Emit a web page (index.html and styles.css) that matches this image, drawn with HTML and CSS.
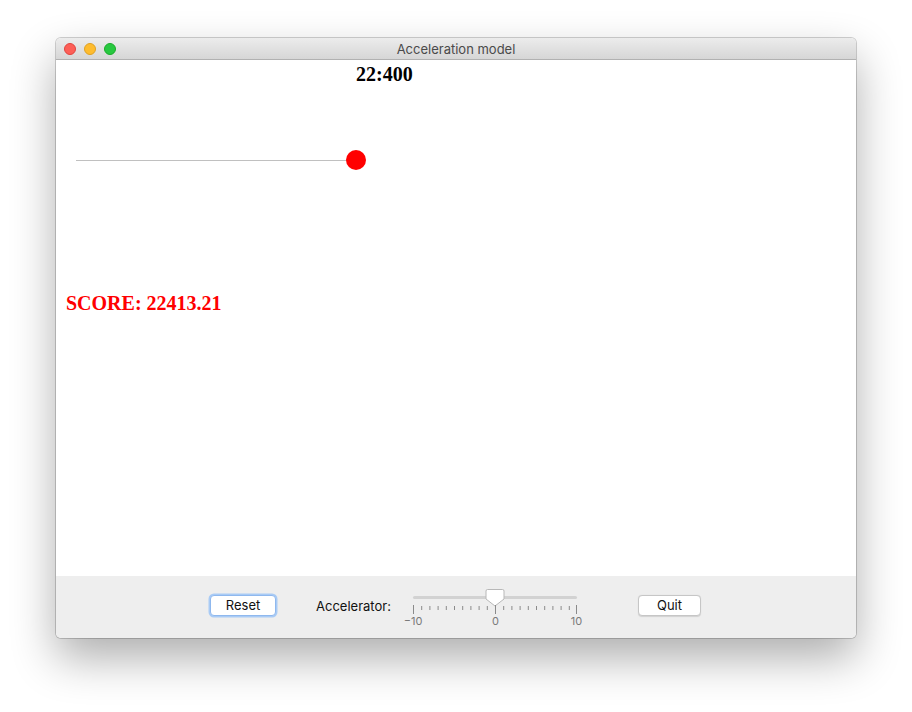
FILE: index.html
```html
<!DOCTYPE html>
<html>
<head>
<meta charset="utf-8">
<link rel="stylesheet" href="styles.css">
</head>
<body>
<div class="window">
  <div class="titlebar">
    <div class="lights">
      <span class="light red"></span>
      <span class="light yellow"></span>
      <span class="light green"></span>
    </div>
    <div class="title">Acceleration model</div>
  </div>
  <div class="canvas">
    <div class="time">22:400</div>
    <div class="trail"></div>
    <div class="ball"></div>
    <div class="score">SCORE: 22413.21</div>
  </div>
  <div class="controls">
    <button class="btn focused">Reset</button>
    <span class="label">Accelerator:</span>
    <div class="slider">
      <div class="track"></div>
      <svg class="thumb" width="20" height="19" viewBox="0 0 20 19">
        <path d="M2.5 1.5 H17.5 A1.5 1.5 0 0 1 19 3 V11 L10 18 L1 11 V3 A1.5 1.5 0 0 1 2.5 1.5 Z" fill="#ffffff" stroke="#b8b8b8" stroke-width="1"/>
      </svg>
      <svg class="ticks" width="170" height="10" viewBox="0 0 170 10">
        <g stroke="#8a8a8a" stroke-width="1">
          <line x1="3.5" y1="0" x2="3.5" y2="9"/>
          <line x1="11.7" y1="1" x2="11.7" y2="5"/>
          <line x1="19.9" y1="1" x2="19.9" y2="5"/>
          <line x1="28.1" y1="1" x2="28.1" y2="5"/>
          <line x1="36.3" y1="1" x2="36.3" y2="5"/>
          <line x1="44.5" y1="1" x2="44.5" y2="5"/>
          <line x1="52.7" y1="1" x2="52.7" y2="5"/>
          <line x1="60.9" y1="1" x2="60.9" y2="5"/>
          <line x1="69.1" y1="1" x2="69.1" y2="5"/>
          <line x1="77.3" y1="1" x2="77.3" y2="5"/>
          <line x1="85.5" y1="0" x2="85.5" y2="9"/>
          <line x1="93.7" y1="1" x2="93.7" y2="5"/>
          <line x1="101.9" y1="1" x2="101.9" y2="5"/>
          <line x1="110.1" y1="1" x2="110.1" y2="5"/>
          <line x1="118.3" y1="1" x2="118.3" y2="5"/>
          <line x1="126.5" y1="1" x2="126.5" y2="5"/>
          <line x1="134.7" y1="1" x2="134.7" y2="5"/>
          <line x1="142.9" y1="1" x2="142.9" y2="5"/>
          <line x1="151.1" y1="1" x2="151.1" y2="5"/>
          <line x1="159.3" y1="1" x2="159.3" y2="5"/>
          <line x1="166.5" y1="0" x2="166.5" y2="9"/>
        </g>
      </svg>
      <div class="marks">
        <span class="mark m-left">&minus;10</span>
        <span class="mark m-mid">0</span>
        <span class="mark m-right">10</span>
      </div>
    </div>
    <button class="btn quit">Quit</button>
  </div>
</div>
</body>
</html>
```
FILE: styles.css
```css
html, body {
  margin: 0;
  padding: 0;
  background: #ffffff;
}
body {
  width: 912px;
  height: 712px;
  padding: 38px 56px 0 56px;
  box-sizing: border-box;
  overflow: hidden;
}
.window {
  width: 800px;
  height: 600px;
  border-radius: 5px;
  overflow: hidden;
  display: flex;
  flex-direction: column;
  box-shadow: 0 0 0 1px rgba(0,0,0,0.18), 0 20px 45px rgba(0,0,0,0.32);
  background: #ffffff;
}
.titlebar {
  height: 22px;
  flex: none;
  position: relative;
  background: linear-gradient(#ececec, #d6d6d6);
  border-bottom: 1px solid #b1b1b1;
  box-sizing: border-box;
  display: flex;
  align-items: center;
  justify-content: center;
}
.lights {
  position: absolute;
  left: 8px;
  top: 5px;
  display: flex;
  gap: 8px;
}
.light {
  width: 12px;
  height: 12px;
  border-radius: 50%;
  box-sizing: border-box;
}
.red { background: #fd5f57; border: 0.5px solid #e0443e; }
.yellow { background: #febc2e; border: 0.5px solid #dea123; }
.green { background: #28c840; border: 0.5px solid #1aab29; }
.title {
  font-family: Inter, "Liberation Sans", Arial, sans-serif;
  font-size: 13px;
  color: #4a4a4a;
  margin-top: 1px;
}
.canvas {
  flex: 1;
  position: relative;
  background: #ffffff;
}
.time {
  position: absolute;
  left: 300px;
  top: 3px;
  font-family: "Liberation Serif", "Times New Roman", serif;
  font-weight: bold;
  font-size: 20px;
  color: #000;
}
.trail {
  position: absolute;
  left: 20px;
  top: 100px;
  width: 272px;
  height: 1px;
  background: #c0c0c0;
}
.ball {
  position: absolute;
  left: 290px;
  top: 90px;
  width: 20px;
  height: 20px;
  border-radius: 50%;
  background: #ff0000;
}
.score {
  position: absolute;
  left: 10px;
  top: 232px;
  font-family: "Liberation Serif", "Times New Roman", serif;
  font-weight: bold;
  font-size: 20px;
  color: #ff0000;
}
.controls {
  height: 62px;
  flex: none;
  background: #eeeeee;
  display: flex;
  align-items: flex-start;
  padding-top: 19px;
  box-sizing: border-box;
  padding-left: 154px;
}
.btn {
  font-family: Inter, "Liberation Sans", Arial, sans-serif;
  font-size: 13px;
  color: #111;
  background: #ffffff;
  border: 1px solid #c6c6c6;
  border-radius: 4px;
  height: 21px;
  width: 63px;
  padding: 0;
  margin: 0;
  box-shadow: 0 0.5px 1px rgba(0,0,0,0.12);
  line-height: 19px;
  flex: none;
}
.btn.focused {
  width: 66px;
  border: 1px solid #8fb8ee;
  box-shadow: 0 0 0 1.5px #a9cbf5;
}
.label {
  font-family: Inter, "Liberation Sans", Arial, sans-serif;
  font-size: 13px;
  color: #111;
  margin-left: 40px;
  margin-top: 3px;
  width: 74px;
  white-space: nowrap;
  flex: none;
}
.slider {
  position: relative;
  width: 170px;
  height: 40px;
  margin-left: 20px;
  margin-top: -8px;
  flex: none;
}
.track {
  position: absolute;
  left: 3px;
  top: 9px;
  width: 164px;
  height: 3px;
  border-radius: 2px;
  background: #d2d2d2;
}
.thumb {
  position: absolute;
  left: 75px;
  top: 1px;
}
.ticks {
  position: absolute;
  left: 0;
  top: 18px;
}
.marks {
  position: absolute;
  left: 0;
  top: 27px;
  width: 170px;
  height: 14px;
  font-family: Inter, "Liberation Sans", Arial, sans-serif;
  font-size: 11px;
  color: #7a7a7a;
}
.mark {
  position: absolute;
  top: 0;
  transform: translateX(-50%);
}
.m-left { left: 3px; }
.m-mid { left: 85.5px; }
.m-right { left: 166.5px; }
.btn.quit {
  margin-left: 58px;
}
```
